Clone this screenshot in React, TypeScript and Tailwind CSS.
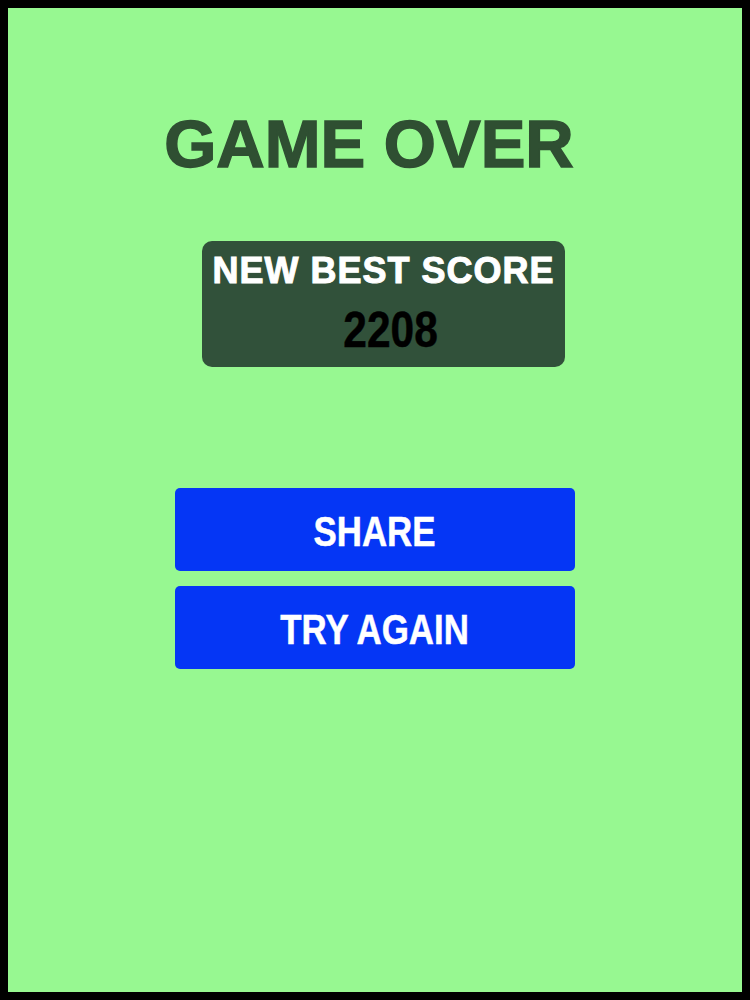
const font = { fontFamily: '"Liberation Sans", Arial, sans-serif' };

function ActionButton({ label }: { label: string }) {
  return (
    <button
      type="button"
      className="flex h-[83px] w-[400px] items-center justify-center rounded-[5px] bg-[#0536f5] pt-[5px] text-[42px] leading-none font-bold text-white"
    >
      <span className="inline-block scale-x-[0.83] [-webkit-text-stroke:0.5px_white]">{label}</span>
    </button>
  );
}

export default function App() {
  return (
    <div className="h-[1000px] w-[750px] bg-black p-2" style={font}>
      <div className="flex h-full w-full flex-col items-center bg-[#97f891] pt-[102px]">
        <h1 className="mr-[12px] text-[67px] leading-none font-bold text-[#2f4f32] [-webkit-text-stroke:1.5px_#2f4f32]">
          GAME OVER
        </h1>

        <div className="mt-[64px] ml-[17px] flex h-[126px] w-[363px] flex-col items-center rounded-[10px] bg-[#31513a] pt-[12px]">
          <div className="text-[36px] leading-none font-bold tracking-[1px] text-white [-webkit-text-stroke:1px_white]">
            NEW BEST SCORE
          </div>
          <div className="mt-[16px] ml-[14px] text-[50px] leading-none font-bold text-black">
            <span className="inline-block scale-x-[0.85] [-webkit-text-stroke:0.5px_black]">2208</span>
          </div>
        </div>

        <div className="mt-[121px] flex flex-col gap-[15px]">
          <ActionButton label="SHARE" />
          <ActionButton label="TRY AGAIN" />
        </div>
      </div>
    </div>
  );
}
